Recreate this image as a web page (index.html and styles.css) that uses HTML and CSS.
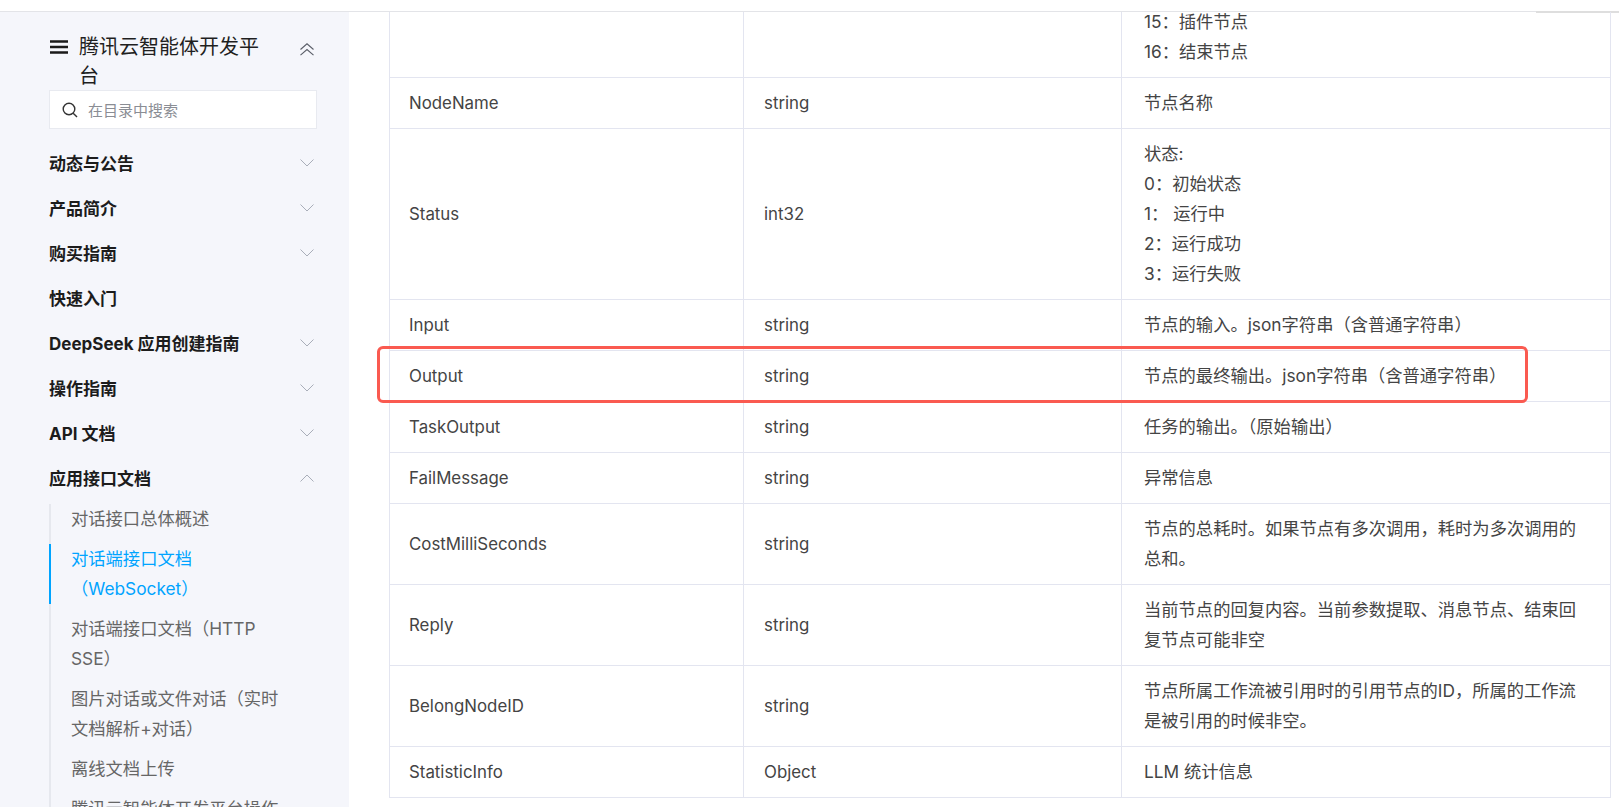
FILE: index.html
```html
<!DOCTYPE html>
<html lang="zh-CN">
<head>
  <meta charset="UTF-8" />
  <title>腾讯云智能体开发平台</title>
  <link rel="stylesheet" href="styles.css">
</head>
<body>
  <div class="topbar"><span class="topbar-mark"></span></div>

  <div class="layout">
    <aside class="sidebar">
      <div class="side-title">
        <svg class="menu-icon" width="18" height="14" viewBox="0 0 18 14"><path d="M0 1.5h18M0 7h18M0 12.5h18" stroke="#1a1a1a" stroke-width="2.5" fill="none"/></svg>
        <span class="side-title-text">腾讯云智能体开发平台</span>
        <svg class="collapse-icon" width="14" height="13" viewBox="0 0 14 13"><path d="M0.5 6.5L7 0.8l6.5 5.7M0.5 12.2L7 6.5l6.5 5.7" stroke="#5a5e68" stroke-width="1.1" fill="none"/></svg>
      </div>

      <div class="side-search">
        <svg width="16" height="16" viewBox="0 0 16 16"><circle cx="7" cy="7" r="5.8" stroke="#333" stroke-width="1.4" fill="none"/><path d="M11.2 11.2L15 15" stroke="#333" stroke-width="1.4" fill="none"/></svg>
        <span>在目录中搜索</span>
      </div>

      <ul class="nav">
        <li class="nav-item"><span>动态与公告</span><svg class="chev" viewBox="0 0 14 8"><path d="M0.5 0.5L7 7l6.5-6.5"/></svg></li>
        <li class="nav-item"><span>产品简介</span><svg class="chev" viewBox="0 0 14 8"><path d="M0.5 0.5L7 7l6.5-6.5"/></svg></li>
        <li class="nav-item"><span>购买指南</span><svg class="chev" viewBox="0 0 14 8"><path d="M0.5 0.5L7 7l6.5-6.5"/></svg></li>
        <li class="nav-item"><span>快速入门</span></li>
        <li class="nav-item"><span>DeepSeek 应用创建指南</span><svg class="chev" viewBox="0 0 14 8"><path d="M0.5 0.5L7 7l6.5-6.5"/></svg></li>
        <li class="nav-item"><span>操作指南</span><svg class="chev" viewBox="0 0 14 8"><path d="M0.5 0.5L7 7l6.5-6.5"/></svg></li>
        <li class="nav-item"><span>API 文档</span><svg class="chev" viewBox="0 0 14 8"><path d="M0.5 0.5L7 7l6.5-6.5"/></svg></li>
        <li class="nav-item"><span>应用接口文档</span><svg class="chev" viewBox="0 0 14 8"><path d="M0.5 7.5L7 1l6.5 6.5"/></svg></li>
      </ul>

      <ul class="subnav">
        <li>对话接口总体概述</li>
        <li class="active">对话端接口文档（WebSocket）</li>
        <li>对话端接口文档（HTTP SSE）</li>
        <li>图片对话或文件对话（实时文档解析+对话）</li>
        <li>离线文档上传</li>
        <li>腾讯云智能体开发平台操作</li>
      </ul>
    </aside>

    <main class="content">
      <div class="table-wrap">
        <table>
          <colgroup>
            <col class="col-name"><col class="col-type"><col class="col-desc">
          </colgroup>
          <tbody>
            <tr>
              <td></td>
              <td></td>
              <td><div>15：插件节点</div><div>16：结束节点</div></td>
            </tr>
            <tr><td>NodeName</td><td>string</td><td>节点名称</td></tr>
            <tr>
              <td>Status</td>
              <td>int32</td>
              <td>
                <div>状态:</div>
                <div>0：初始状态</div>
                <div>1：&nbsp;运行中</div>
                <div>2：运行成功</div>
                <div>3：运行失败</div>
              </td>
            </tr>
            <tr><td>Input</td><td>string</td><td>节点的输入。json字符串（含普通字符串）</td></tr>
            <tr><td>Output</td><td>string</td><td>节点的最终输出。json字符串（含普通字符串）</td></tr>
            <tr><td>TaskOutput</td><td>string</td><td>任务的输出。（原始输出）</td></tr>
            <tr><td>FailMessage</td><td>string</td><td>异常信息</td></tr>
            <tr><td>CostMilliSeconds</td><td>string</td><td>节点的总耗时。如果节点有多次调用，耗时为多次调用的总和。</td></tr>
            <tr><td>Reply</td><td>string</td><td>当前节点的回复内容。当前参数提取、消息节点、结束回复节点可能非空</td></tr>
            <tr><td>BelongNodeID</td><td>string</td><td>节点所属工作流被引用时的引用节点的ID，所属的工作流是被引用的时候非空。</td></tr>
            <tr><td>StatisticInfo</td><td>Object</td><td>LLM 统计信息</td></tr>
          </tbody>
        </table>
        <div class="highlight"></div>
      </div>
    </main>
  </div>
</body>
</html>
```

FILE: styles.css
```css
* {
  box-sizing: border-box;
}

html, body {
  height: 100%;
  margin: 0;
  overflow: hidden;
}

body {
  font-family: Inter, "Noto Sans CJK SC", sans-serif;
  background: #fff;
  color: #444;
}

ul {
  list-style: none;
  margin: 0;
  padding: 0;
}

.topbar {
  height: 12px;
  background: #fff;
  border-bottom: 1px solid #e3e4e8;
  display: flex;
  justify-content: flex-end;
}

.topbar-mark {
  width: 83px;
  height: 13px;
  border-bottom: 2px solid #dedede;
}

.layout {
  display: flex;
  height: 795px;
}

/* sidebar */
.sidebar {
  width: 349px;
  flex-shrink: 0;
  background: #f5f6fb;
  padding: 21px 32px 0 49px;
  overflow: hidden;
}

.side-title {
  display: flex;
  align-items: flex-start;
  font-size: 20px;
  line-height: 29px;
  color: #1f1f1f;
}

.menu-icon {
  flex-shrink: 0;
  margin: 7px 11px 0 1px;
}

.side-title-text {
  flex: 1;
  padding-right: 32px;
}

.collapse-icon {
  flex-shrink: 0;
  margin: 10px 3px 0 0;
}

.side-search {
  display: flex;
  align-items: center;
  gap: 10px;
  height: 39px;
  margin-top: -1px;
  padding-left: 12px;
  background: #fff;
  border: 1px solid #e8eaf0;
  font-size: 15px;
  color: #8a8d94;
}

.nav {
  margin-top: 11px;
}

.nav-item {
  display: flex;
  justify-content: space-between;
  align-items: center;
  height: 45px;
  font-size: 17px;
  font-weight: 700;
  color: #1c1c1c;
}

.chev {
  width: 14px;
  height: 8px;
  margin-right: 3px;
  fill: none;
  stroke: #a9aeb9;
  stroke-width: 1;
}

.subnav {
  margin-top: 4px;
  border-left: 2px solid #e6e8ee;
  display: flex;
  flex-direction: column;
  gap: 10px;
}

.subnav li {
  margin-left: -2px;
  border-left: 2px solid transparent;
  padding: 0 28px 0 20px;
  font-size: 17.3px;
  line-height: 30px;
  color: #666;
}

.subnav li.active {
  border-left-color: #00a4ff;
  color: #00a4ff;
}

/* table */
.content {
  flex: 1;
  min-width: 0;
  padding: 0 8px 0 40px;
  overflow: hidden;
}

.table-wrap {
  position: relative;
  margin-top: -16px;
}

table {
  width: 100%;
  table-layout: fixed;
  border-collapse: collapse;
  font-size: 17.3px;
  line-height: 30px;
}

.col-name { width: 354px; }
.col-type { width: 378px; }

td {
  padding: 10px 20px;
  border: 1px solid #e3e5f0;
  color: #444;
  font-size: 16.85px;
}

td:first-child {
  padding-left: 19px;
}

td:last-child {
  padding-left: 22px;
  font-size: 17.3px;
}

.highlight {
  position: absolute;
  left: -12px;
  top: 350px;
  width: 1151px;
  height: 57px;
  border: 3px solid #fa5a50;
  border-radius: 6px;
}
```
